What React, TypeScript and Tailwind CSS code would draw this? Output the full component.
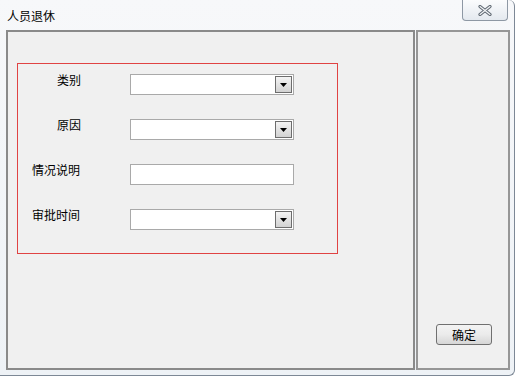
import React from 'react';

const FONT = { fontFamily: '"SimSun", "Noto Sans CJK SC", sans-serif' };

const ComboArrow = () => (
  <div className="absolute right-[1px] top-[1px] w-[17px] h-[17px] border border-[#6d6d6d] bg-gradient-to-b from-[#f4f4f4] to-[#d2d2d2] flex items-center justify-center">
    <svg width="7" height="4" viewBox="0 0 7 4">
      <polygon points="0,0 7,0 3.5,4" fill="#000" />
    </svg>
  </div>
);

const rows = [
  { label: '类别', pl: 'pl-[39px]', combo: true },
  { label: '原因', pl: 'pl-[39px]', combo: true },
  { label: '情况说明', pl: 'pl-[14px]', combo: false },
  { label: '审批时间', pl: 'pl-[14px]', combo: true },
];

export default function App() {
  return (
    <div className="w-[516px] h-[377px] bg-white overflow-hidden text-[12px] text-black" style={FONT}>
      <div className="w-[515px] h-[376px] bg-gradient-to-b from-[#f7f8fa] to-[#eef2f6] border-r border-b border-[#7d8896] rounded-tr-[6px] rounded-br-[6px] flex flex-col">
        {/* title bar */}
        <div className="h-[30px] flex items-start justify-between">
          <span className="pl-[7px] pt-[9px] leading-[14px]">人员退休</span>
          <div className="mr-[6px] w-[46px] h-[21px] rounded-b-[4px] border border-t-0 border-[#8e98a4] bg-gradient-to-b from-[#fbfcfd] to-[#e4e9ef] flex items-center justify-center">
            <svg width="14" height="11" viewBox="0 0 14 11">
              <path d="M2 1.5 L12 9.5 M12 1.5 L2 9.5" stroke="#5d6670" strokeWidth="3.2" strokeLinecap="round" fill="none" />
              <path d="M2 1.5 L12 9.5 M12 1.5 L2 9.5" stroke="#f4f6f8" strokeWidth="1.2" strokeLinecap="round" fill="none" />
            </svg>
          </div>
        </div>

        {/* body */}
        <div className="flex pl-[6px] gap-[1px]">
          <div className="w-[409px] h-[340px] border-2 border-[#8a8a8a] bg-[#f0f0f0] pl-[9px] pt-[31px]">
            <div className="w-[321px] h-[191px] border border-[#e04343] pt-[10px] flex flex-col gap-[24px]">
              {rows.map((r) => (
                <div key={r.label} className="flex items-start h-[21px]">
                  <span className={`w-[112px] ${r.pl} leading-[14px] -mt-[1px]`}>{r.label}</span>
                  <div className="relative w-[164px] h-[21px] border border-[#a9a9a9] bg-white">
                    {r.combo && <ComboArrow />}
                  </div>
                </div>
              ))}
            </div>
          </div>
          <div className="w-[94px] h-[340px] border-2 border-[#969696] bg-[#f0f0f0] flex flex-col">
            <button className="mt-auto mb-[23px] ml-[18px] w-[56px] h-[21px] rounded-[3px] border border-[#707070] bg-gradient-to-b from-[#f3f3f3] via-[#ebebeb] to-[#d6d6d6] leading-[14px] text-[12px]">
              确定
            </button>
          </div>
        </div>
      </div>
    </div>
  );
}
